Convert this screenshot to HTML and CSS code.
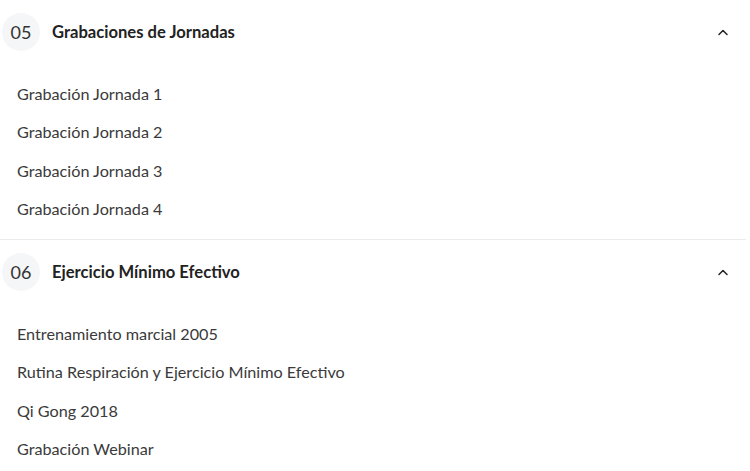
FILE: index.html
```html
<!DOCTYPE html>
<html lang="es">

<head>
    <meta charset="UTF-8">
    <meta name="viewport" content="width=device-width, initial-scale=1.0">
    <title>Módulos</title>
    <link rel="stylesheet" href="styles.css">
</head>

<body>
    <main class="modules">
        <section class="module">
            <header class="module-head">
                <span class="module-num">05</span>
                <h2>Grabaciones de Jornadas</h2>
                <svg class="chevron" viewBox="0 0 12 8" width="12" height="8" aria-hidden="true">
                    <path d="M2 6.5 L6 2.5 L10 6.5" fill="none" stroke="#222" stroke-width="1.5" stroke-linecap="round" stroke-linejoin="round" />
                </svg>
            </header>
            <ul class="lessons">
                <li>Grabación Jornada 1</li>
                <li>Grabación Jornada 2</li>
                <li>Grabación Jornada 3</li>
                <li>Grabación Jornada 4</li>
            </ul>
        </section>

        <section class="module">
            <header class="module-head">
                <span class="module-num">06</span>
                <h2>Ejercicio Mínimo Efectivo</h2>
                <svg class="chevron" viewBox="0 0 12 8" width="12" height="8" aria-hidden="true">
                    <path d="M2 6.5 L6 2.5 L10 6.5" fill="none" stroke="#222" stroke-width="1.5" stroke-linecap="round" stroke-linejoin="round" />
                </svg>
            </header>
            <ul class="lessons">
                <li>Entrenamiento marcial 2005</li>
                <li>Rutina Respiración y Ejercicio Mínimo Efectivo</li>
                <li>Qi Gong 2018</li>
                <li>Grabación Webinar</li>
            </ul>
        </section>
    </main>
</body>

</html>
```

FILE: styles.css
```css
*,
*::before,
*::after {
    box-sizing: border-box;
    margin: 0;
    padding: 0;
}

body {
    font-family: Lato, 'Noto Sans', sans-serif;
    background: white;
    color: #333;
    overflow: hidden;
}

.modules {
    width: 746px;
}

.module {
    border-bottom: 1px solid #ececec;
}

.module-head {
    display: flex;
    align-items: center;
    height: 64px;
    padding: 0 17px 0 2px;

    & h2 {
        flex: 1;
        font-size: 16.6px;
        font-weight: 700;
        color: #222;
    }
}

.module-num {
    display: grid;
    place-content: center;
    width: 38px;
    height: 38px;
    margin-right: 12px;
    border-radius: 50%;
    background: #f5f6f8;
    font-size: 18px;
    color: #333;
}

.lessons {
    list-style: none;
    padding: 10px 0 11px 17px;

    & li {
        height: 38.5px;
        display: flex;
        align-items: center;
        font-size: 16.2px;
        color: #3a3a3a;
    }
}
```
